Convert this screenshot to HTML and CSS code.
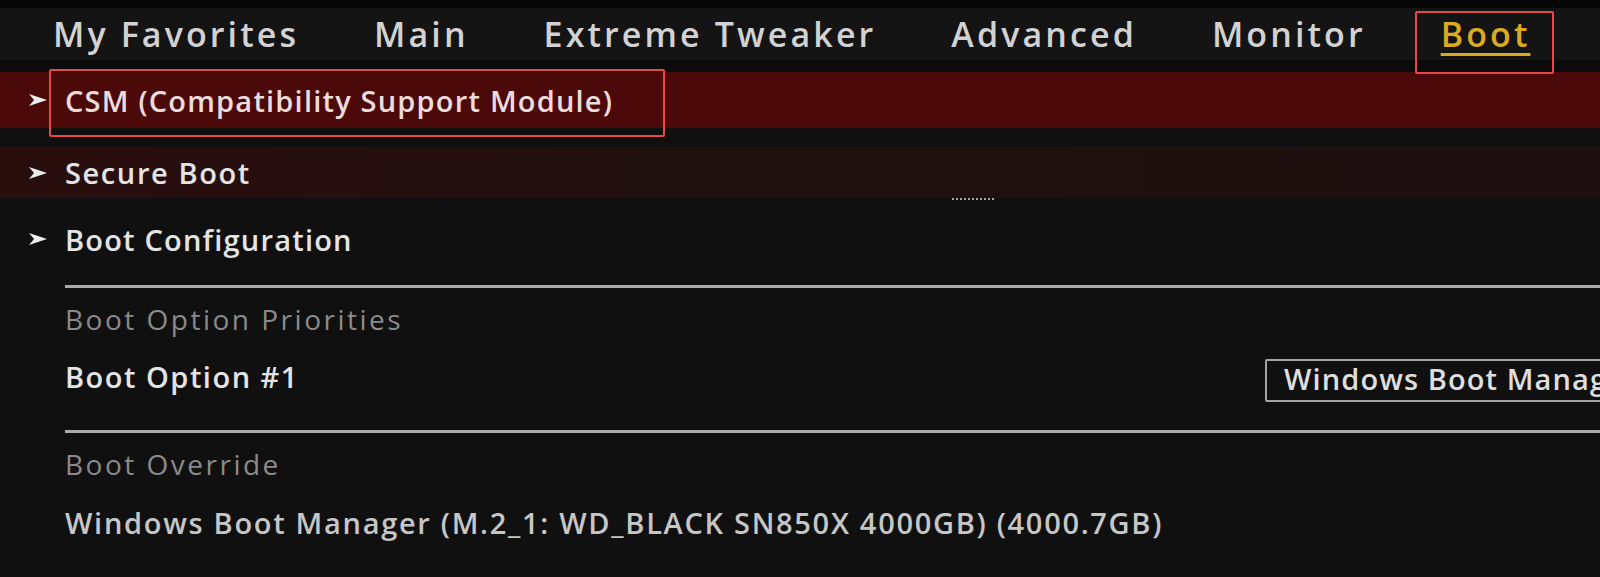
FILE: index.html
```html
<!DOCTYPE html>
<html lang="en">
<head>
    <meta charset="UTF-8">
    <meta name="viewport" content="width=device-width, initial-scale=1.0">
    <title>UEFI BIOS - Boot</title>
    <link rel="stylesheet" href="styles.css">
</head>
<body>
    <div class="top"></div>
    <nav class="tabs">
        <span class="tab">My Favorites</span>
        <span class="tab">Main</span>
        <span class="tab">Extreme Tweaker</span>
        <span class="tab">Advanced</span>
        <span class="tab">Monitor</span>
        <span class="tab current">Boot<span class="mark mark-tab"></span></span>
    </nav>
    <div class="menu">
        <div class="item active">
            <svg class="arrow" viewBox="0 0 18 12"><path d="M0 0 L18 6 L0 12 L5 6 Z"/></svg>
            <span>CSM (Compatibility Support Module)</span>
            <span class="mark mark-item"></span>
        </div>
        <div class="item dim">
            <svg class="arrow" viewBox="0 0 18 12"><path d="M0 0 L18 6 L0 12 L5 6 Z"/></svg>
            <span>Secure Boot</span>
            <span class="dots"></span>
        </div>
        <div class="item plain">
            <svg class="arrow" viewBox="0 0 18 12"><path d="M0 0 L18 6 L0 12 L5 6 Z"/></svg>
            <span>Boot Configuration</span>
        </div>
    </div>
    <section class="group">
        <div class="rule"></div>
        <div class="caption">Boot Option Priorities</div>
        <div class="setting">
            <span class="label">Boot Option #1</span>
            <div class="select">Windows Boot Manager (M.2_1: WD_BLACK SN850X 4000GB)</div>
        </div>
        <div class="rule rule-low"></div>
        <div class="caption">Boot Override</div>
        <div class="entry">Windows Boot Manager (M.2_1: WD_BLACK SN850X 4000GB) (4000.7GB)</div>
    </section>
</body>
</html>
```
FILE: styles.css
```css
body {
    margin: 0;
    padding: 0;
    background-color: #101010;
    color: #e4e4e4;
    font-family: "Open Sans", "Noto Sans", sans-serif;
    font-weight: 600;
    overflow: hidden;
    height: 577px;
}
.top {
    height: 8px;
    background-color: #060606;
}
.tabs {
    height: 52px;
    display: flex;
    align-items: center;
    gap: 75px;
    padding-left: 53px;
    background-color: #141414;
    border-bottom: 12px solid #0b0b0b;
    font-size: 34px;
    letter-spacing: 3.1px;
    color: #d2d2d2;
}
.tab {
    position: relative;
    white-space: nowrap;
}
.current {
    color: #dcaa1e;
    text-decoration: underline;
    text-decoration-thickness: 3px;
    text-underline-offset: 6px;
}
.mark {
    position: absolute;
    z-index: 2;
    border: 2px solid #e8474b;
    border-radius: 2px;
}
.mark-tab {
    left: -26px;
    right: -24px;
    top: 0;
    height: 59px;
}
.item {
    position: relative;
    display: flex;
    align-items: center;
    gap: 18px;
    padding-left: 29px;
    font-size: 29px;
    letter-spacing: 1.2px;
    white-space: nowrap;
}
.arrow {
    width: 18px;
    height: 12px;
    fill: #ececec;
}
.active {
    height: 56px;
    margin-bottom: 19px;
    background-color: #4b0909;
    color: #ecdcdc;
}
.mark-item {
    left: 49px;
    top: -3px;
    width: 612px;
    height: 64px;
}
.dim {
    height: 51px;
    margin-bottom: 16px;
    background: linear-gradient(to right, #2a0e0e, #211010 40%, #1e1010);
    letter-spacing: 1.6px;
}
.dots {
    position: absolute;
    left: 952px;
    bottom: -2px;
    width: 42px;
    border-top: 2px dotted #a8a8a8;
}
.plain {
    height: 50px;
}
.group {
    padding-left: 65px;
}
.rule {
    height: 3px;
    margin-top: 21px;
    background-color: #ababab;
}
.rule-low {
    margin-top: 28px;
}
.caption {
    height: 38px;
    line-height: 38px;
    margin-top: 12px;
    font-size: 28px;
    font-weight: 400;
    letter-spacing: 2.5px;
    color: #8a8a8a;
}
.setting {
    height: 43px;
    margin-top: 21px;
    display: flex;
    align-items: center;
    font-size: 29px;
    letter-spacing: 1.5px;
    white-space: nowrap;
}
.label {
    margin-bottom: 8px;
}
.select {
    margin-left: auto;
    margin-right: -400px;
    box-sizing: border-box;
    width: 735px;
    height: 43px;
    line-height: 36px;
    padding-left: 17px;
    border: 2px solid #a4a4a4;
    border-radius: 2px;
    color: #dedede;
    letter-spacing: 1.1px;
    overflow: hidden;
}
.entry {
    height: 38px;
    line-height: 38px;
    margin-top: 21px;
    font-size: 29px;
    letter-spacing: 1.7px;
    color: #c6c6c6;
    white-space: nowrap;
}
```
